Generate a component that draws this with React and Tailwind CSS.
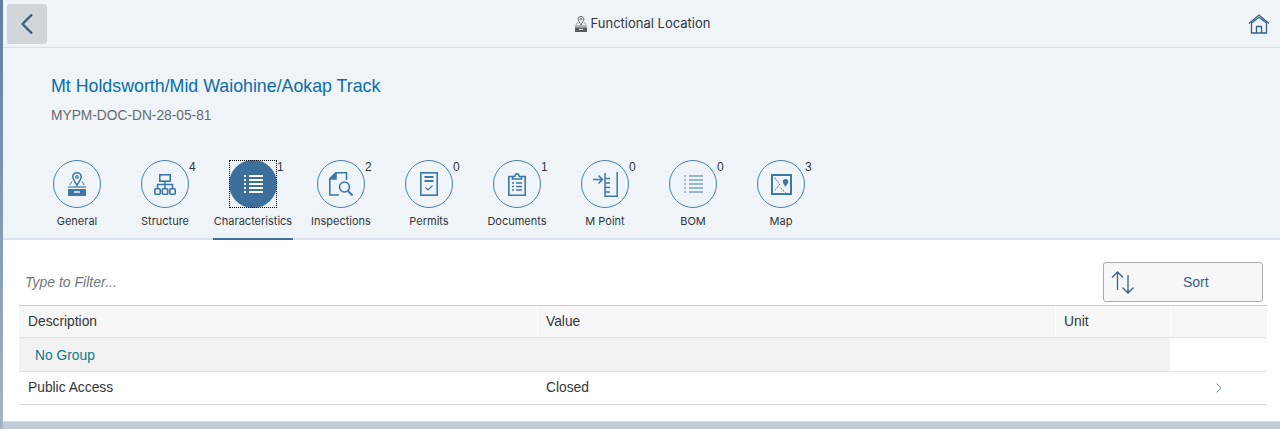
import { ChevronLeft, ChevronRight } from "lucide-react"

const blue = "#3f77a8"

function GeneralIcon({ width = 18, height = 24, color = blue, slot = "#eff4f9" }) {
    return (
        <svg width={width} height={height} viewBox="0 0 18 24" fill="none" stroke={color} strokeWidth="1.500">
            <path d="M9 .8C6.400.8 4.700 2.600 4.700 4.800 4.700 7 7.300 10 9 13.500 10.700 10 13.300 7 13.300 4.800 13.300 2.600 11.600.8 9 .8z" />
            <circle cx="9" cy="4.900" r="1.300" strokeWidth="1.200" />
            <path d="M4 9.500L1.800 13M14 9.500l2.200 3.500" strokeWidth="1" />
            <path d="M0 15h18" strokeWidth="1.200" />
            <path d="M0 17h18v7H0z" fill={color} stroke="none" />
            <path d="M6 20h6" stroke={slot} strokeWidth="1.500" />
        </svg>
    )
}

function StructureIcon() {
    return (
        <svg width="22" height="21" viewBox="0 0 22 21" fill="none" stroke={blue} strokeWidth="1.600">
            <rect x="5.800" y=".8" width="10.400" height="6.400" />
            <path d="M11 7.200V14M3.500 14v-3.500h15V14" />
            <rect x=".8" y="14.800" width="5.400" height="5.400" rx="1" />
            <rect x="8.300" y="14.800" width="5.400" height="5.400" rx="1" />
            <rect x="15.800" y="14.800" width="5.400" height="5.400" rx="1" />
        </svg>
    )
}

function ListIcon({ color = blue, weight = 1.500 }) {
    return (
        <svg width="19" height="18" viewBox="0 0 19 18" fill="none" stroke={color} strokeWidth={weight}>
            <path d="M5 1h14M5 5h14M5 9h14M5 13h14M5 17h14" />
            <path d="M0 1h2M0 5h2M0 9h2M0 13h2M0 17h2" />
        </svg>
    )
}

function InspectIcon() {
    return (
        <svg width="24" height="24" viewBox="0 0 24 24" fill="none" stroke={blue} strokeWidth="1.600">
            <path d="M10 23H.8V7L7 .8h10.500V8" />
            <path d="M.8 7H7V.8z" fill={blue} />
            <circle cx="15.500" cy="15" r="5" />
            <path d="M19 19l4.500 4.500" strokeWidth="2" />
        </svg>
    )
}

function PermitIcon() {
    return (
        <svg width="18" height="24" viewBox="0 0 18 24" fill="none" stroke={blue} strokeWidth="1.600">
            <rect x=".8" y=".8" width="16.400" height="22.400" />
            <path d="M4.500 5h9M4.500 9h9" strokeWidth="1.800" />
            <path d="M5.500 15.500l2.500 2.500 4.500-4.500" strokeWidth="1.200" />
        </svg>
    )
}

function DocIcon() {
    return (
        <svg width="18" height="23" viewBox="0 0 18 23" fill="none" stroke={blue} strokeWidth="1.600">
            <path d="M4.500 3.500H.8v18.700h16.400V3.500h-3.700" />
            <path d="M4.500 6V3.500h2.300C7 2 7.800.8 9 .8s2 1.200 2.200 2.700h2.300V6z" />
            <path d="M4 10h2M4 13.500h2M4 17h2M8 10h6M8 13.500h6M8 17h6" strokeWidth="1.300" />
        </svg>
    )
}

function MPointIcon() {
    return (
        <svg width="25" height="25" viewBox="0 0 25 25" fill="none" stroke={blue} strokeWidth="1.500">
            <path d="M0 7.500h9M5.500 3.500l4 4-4 4" />
            <path d="M12 1v23.200h12.200V0" />
            <path d="M12 6.500h5M12 11h5M12 15.500h5M12 20h5" />
        </svg>
    )
}

function MapIcon() {
    return (
        <svg width="21" height="21" viewBox="0 0 21 21" fill="none" stroke={blue} strokeWidth="2">
            <rect x="1" y="1" width="19" height="19" />
            <path d="M3.500 3.500l4.500 6M9 10l-5.500 7M9.500 14l5 4.500" strokeWidth="1" strokeDasharray="2 1" />
            <path d="M14.500 5C12.800 5 11.700 6.200 11.700 7.600c0 1.500 1.700 3.400 2.800 5.400 1.100-2 2.800-3.900 2.800-5.400C17.300 6.200 16.200 5 14.500 5z" fill={blue} stroke="none" />
        </svg>
    )
}

function HomeIcon() {
    return (
        <svg width="22" height="20" viewBox="0 0 22 20" fill="none" stroke="#346187" strokeWidth="1.300">
            <path d="M1 9.500L11 1l10 8.500" />
            <path d="M3.500 9v10h15V9L11 3.200z" />
            <path d="M8.500 19v-6.500h5V19" />
        </svg>
    )
}

function SortIcon() {
    return (
        <svg width="24" height="24" viewBox="0 0 24 24" fill="none" stroke="#346187" strokeWidth="1.300">
            <path d="M6.500 20V2M1 7.500l5.500-5.500L12 7.500" />
            <path d="M17 5v18M11.500 17.500l5.500 5.500 5.500-5.500" />
        </svg>
    )
}

const tabs = [
    { label: "General", icon: <GeneralIcon /> },
    { label: "Structure", count: 4, icon: <StructureIcon /> },
    { label: "Characteristics", count: 1, icon: <ListIcon color="#ffffff" weight={2} />, selected: true },
    { label: "Inspections", count: 2, icon: <InspectIcon /> },
    { label: "Permits", count: 0, icon: <PermitIcon /> },
    { label: "Documents", count: 1, icon: <DocIcon /> },
    { label: "M Point", count: 0, icon: <MPointIcon /> },
    { label: "BOM", count: 0, icon: <ListIcon weight={1.200} /> },
    { label: "Map", count: 3, icon: <MapIcon /> },
]

function Tab({ tab }) {
    return (
        <div className="relative flex h-[88px] w-[88px] flex-col items-center pt-[8px]">
            <div className="relative">
                <div
                    className={
                        tab.selected
                            ? "flex h-[48px] w-[48px] items-center justify-center outline-1 -outline-offset-1 outline-dotted outline-black"
                            : "flex h-[48px] w-[48px] items-center justify-center rounded-full border border-[#4a80ad]"
                    }
                >
                    {tab.selected ? (
                        <div className="flex h-[48px] w-[48px] items-center justify-center rounded-full bg-[#3d6f9c]">{tab.icon}</div>
                    ) : (
                        tab.icon
                    )}
                </div>
                {tab.count !== undefined && (
                    <span className="absolute left-[48px] top-0 text-[12px] leading-[14px] text-[#32363a]">{tab.count}</span>
                )}
            </div>
            <div className="mt-[5px] whitespace-nowrap font-['Inter',sans-serif] text-[11px] leading-[16px] text-[#32363a]">{tab.label}</div>
            {tab.selected && <div className="absolute bottom-0 left-[4px] h-[2px] w-[80px] bg-[#3d6f9c]" />}
        </div>
    )
}

function Row({ className, cols }) {
    return (
        <div className={`grid grid-cols-[518px_518px_115px_97px] text-[13.800px] text-[#32363a] ${className}`}>
            {cols}
        </div>
    )
}

function App() {
    return (
        <div className="flex h-[429px] w-[1280px] overflow-hidden bg-white font-['Liberation_Sans',sans-serif]">
            <div className="w-[3px] shrink-0 bg-gradient-to-b from-[#5f7ea3] to-[#a3b5c8]" />
            <div className="flex min-w-0 flex-1 flex-col">
                <header className="flex h-[48px] shrink-0 items-center justify-between border-b border-[#d5e0ec] bg-[#eff4f9] pl-[4px] pr-[10px]">
                    <button className="flex h-[40px] w-[40px] items-center justify-center rounded-[3px] bg-[#d1d5d9]">
                        <ChevronLeft size={36} color="#346187" strokeWidth={1.600} />
                    </button>
                    <div className="mr-[10px] flex items-center gap-[4px] text-[#32363a]">
                        <GeneralIcon width={12} height={16} color="#565b60" />
                        <span className="font-['Inter',sans-serif] text-[13px]">Functional Location</span>
                    </div>
                    <HomeIcon />
                </header>

                <section className="h-[192px] shrink-0 border-b-2 border-[#d9e4f0] bg-[#eff4f9]">
                    <h1 className="pl-[48px] pt-[27px] text-[17.800px] font-normal leading-[22px] text-[#0a6ead]">
                        Mt Holdsworth/Mid Waiohine/Aokap Track
                    </h1>
                    <p className="pl-[48px] pt-[10px] text-[13.750px] leading-[18px] text-[#666b70]">MYPM-DOC-DN-28-05-81</p>
                    <nav className="mt-[27px] flex pl-[30px]">
                        {tabs.map((tab) => (
                            <Tab key={tab.label} tab={tab} />
                        ))}
                    </nav>
                </section>

                <main className="flex-1 pl-[16px] pr-[13px]">
                    <div className="flex h-[65px] items-start justify-between pr-[4px] pt-[22px]">
                        <span className="pl-[6px] pt-[10px] text-[14px] italic text-[#74777a]">Type to Filter...</span>
                        <button className="flex h-[40px] w-[160px] items-center rounded-[3px] border border-[#ababab] bg-[#f7f7f7] pl-[7px]">
                            <SortIcon />
                            <span className="ml-[48px] text-[14px] leading-[16px] text-[#346187]">Sort</span>
                        </button>
                    </div>
                    <Row
                        className="h-[33px] border-y border-t-[#cbcbcb] border-b-[#e2e2e2] bg-[#f7f7f7]"
                        cols={
                            <>
                                <span className="flex items-center pl-[9px] pt-[2px]">Description</span>
                                <span className="flex items-center border-l border-white pl-[8px] pt-[2px]">Value</span>
                                <span className="flex items-center border-l border-white pl-[8px] pt-[2px]">Unit</span>
                                <span className="border-l border-white" />
                            </>
                        }
                    />
                    <div className="flex h-[34px] border-b border-[#e2e2e2]">
                        <div className="flex w-[1151px] items-center bg-[#f2f2f2] pl-[16px] pt-[3px] text-[13.800px] text-[#0a7a8f]">No Group</div>
                    </div>
                    <Row
                        className="h-[33px] items-center border-b border-[#d9d9d9]"
                        cols={
                            <>
                                <span className="pl-[9px]">Public Access</span>
                                <span className="pl-[9px]">Closed</span>
                                <span />
                                <span className="flex pl-[41px]">
                                    <ChevronRight size={16} color="#427cac" strokeWidth={1.300} />
                                </span>
                            </>
                        }
                    />
                </main>
                <div className="h-[8px] shrink-0 border-t border-[#d3e0ec] bg-[#c0ccd8]" />
            </div>
        </div>
    )
}

export default App
